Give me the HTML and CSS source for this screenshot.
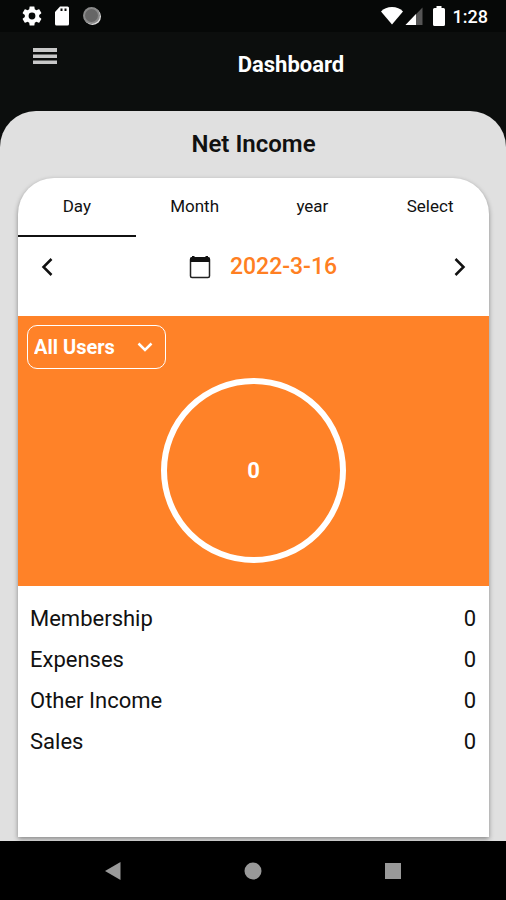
FILE: index.html
```html
<!DOCTYPE html>
<html lang="en">
<head>
<meta charset="utf-8">
<meta name="viewport" content="width=device-width, initial-scale=1">
<title>Dashboard</title>
<link rel="stylesheet" href="styles.css">
</head>
<body>
<div class="status-bar">
  <div class="status-group status-notices">
    <svg width="20" height="20" viewBox="2 2 20 20" aria-hidden="true"><path fill="#fff" d="M19.14 12.94c.04-.3.06-.61.06-.94 0-.32-.02-.64-.07-.94l2.03-1.58c.18-.14.23-.41.12-.61l-1.92-3.32c-.12-.22-.37-.29-.59-.22l-2.39.96c-.5-.38-1.03-.7-1.62-.94l-.36-2.54c-.04-.24-.24-.41-.48-.41h-3.84c-.24 0-.43.17-.47.41l-.36 2.54c-.59.24-1.13.57-1.62.94l-2.39-.96c-.22-.08-.47 0-.59.22L2.74 8.87c-.12.21-.08.47.12.61l2.03 1.58c-.05.3-.09.63-.09.94s.02.64.07.94l-2.03 1.58c-.18.14-.23.41-.12.61l1.92 3.32c.12.22.37.29.59.22l2.39-.96c.5.38 1.03.7 1.62.94l.36 2.54c.05.24.24.41.48.41h3.84c.24 0 .44-.17.47-.41l.36-2.54c.59-.24 1.13-.56 1.62-.94l2.39.96c.22.08.47 0 .59-.22l1.92-3.32c.12-.22.07-.47-.12-.61l-2.01-1.58zM12 15.4a3.4 3.4 0 1 1 0-6.8 3.4 3.4 0 0 1 0 6.8z"/></svg>
    <svg width="16" height="20" viewBox="0 0 16 20" aria-hidden="true"><path fill="#fff" d="M6 .5h7.500a1.500 1.500 0 0 1 1.500 1.500v16a1.500 1.500 0 0 1-1.500 1.500h-11a1.500 1.500 0 0 1-1.500-1.500V6z"/><path fill="#0a0b0b" d="M6.500 2.500h2v2.500h-2zM10.500 2.500h2v2.500h-2z"/></svg>
    <svg width="20" height="20" viewBox="0 0 20 20" aria-hidden="true"><circle cx="10.500" cy="10.500" r="8.500" fill="#e0e0e0"/><circle cx="9.500" cy="9.500" r="8.500" fill="#8a8a8a"/><circle cx="9.500" cy="9.500" r="6.500" fill="#666"/></svg>
  </div>
  <div class="status-group status-system">
    <svg width="22" height="18" viewBox="0 0 22 18" aria-hidden="true"><path fill="#fff" d="M11 17.500L0 4.500C2.500 1.700 6.500 0 11 0s8.500 1.700 11 4.500z"/></svg>
    <svg width="18" height="18" viewBox="0 0 18 18" aria-hidden="true"><path fill="#555" d="M17.500.5V18H.5z"/><path fill="#fff" d="M11 7v11H.5z"/></svg>
    <svg class="battery" width="12" height="20" viewBox="0 0 12 20" aria-hidden="true"><path fill="#fff" d="M3.500 0h5v2H10.500A1.500 1.500 0 0 1 12 3.500v15a1.500 1.500 0 0 1-1.500 1.500h-9A1.500 1.500 0 0 1 0 18.500v-15A1.500 1.500 0 0 1 1.500 2h2z"/></svg>
    <span class="clock">1:28</span>
  </div>
</div>
<header class="app-header">
  <button class="icon-button" type="button" aria-label="Open menu">
    <svg width="24" height="18" viewBox="0 0 24 18" aria-hidden="true"><path fill="#c8c8c8" d="M0 1h24v4H0zM0 7.500h24v3.500H0zM0 13.500h24v3.500H0z"/></svg>
  </button>
  <h1 class="app-title">Dashboard</h1>
</header>
<main class="panel">
  <h2 class="panel-title">Net Income</h2>
  <section class="card">
    <div class="tabs" role="tablist">
      <button class="tab tab-active" type="button" role="tab" aria-selected="true">Day</button>
      <button class="tab" type="button" role="tab" aria-selected="false">Month</button>
      <button class="tab" type="button" role="tab" aria-selected="false">year</button>
      <button class="tab" type="button" role="tab" aria-selected="false">Select</button>
    </div>
    <div class="date-row">
      <button class="icon-button" type="button" aria-label="Previous day">
        <svg width="12" height="20" viewBox="0 0 12 20" aria-hidden="true"><path fill="none" stroke="#111" stroke-width="2.500" d="M10.500 2L2.500 10l8 8"/></svg>
      </button>
      <button class="date-button" type="button">
        <svg width="22" height="24" viewBox="0 0 22 24" aria-hidden="true"><rect x="1.500" y="3" width="19" height="19.500" rx="1.500" fill="none" stroke="#222" stroke-width="1.500"/><path fill="#111" d="M1 7V4a2 2 0 0 1 2-2V1h2.500v1h11V1H19v1a2 2 0 0 1 2 2v3z"/></svg>
        <span>2022-3-16</span>
      </button>
      <button class="icon-button" type="button" aria-label="Next day">
        <svg width="12" height="20" viewBox="0 0 12 20" aria-hidden="true"><path fill="none" stroke="#111" stroke-width="2.500" d="M1.500 2l8 8-8 8"/></svg>
      </button>
    </div>
    <div class="summary">
      <div class="user-filter">
        <select class="user-select" aria-label="Users"><option>All Users</option></select>
        <svg class="user-chevron" width="16" height="10" viewBox="0 0 16 10" aria-hidden="true"><path fill="none" stroke="#fff" stroke-width="2.500" d="M1.500 1.500L8 8l6.500-6.500"/></svg>
      </div>
      <div class="ring">0</div>
    </div>
    <dl class="totals">
      <div class="total"><dt>Membership</dt><dd>0</dd></div>
      <div class="total"><dt>Expenses</dt><dd>0</dd></div>
      <div class="total"><dt>Other Income</dt><dd>0</dd></div>
      <div class="total"><dt>Sales</dt><dd>0</dd></div>
    </dl>
  </section>
</main>
<nav class="system-nav" aria-label="System">
  <button class="icon-button" type="button" aria-label="Back"><svg width="18" height="18" viewBox="0 0 18 18" aria-hidden="true"><path fill="#999" d="M16.500 0v18L1 9z"/></svg></button>
  <button class="icon-button" type="button" aria-label="Home"><svg width="18" height="18" viewBox="0 0 18 18" aria-hidden="true"><circle cx="9" cy="9" r="8.500" fill="#999"/></svg></button>
  <button class="icon-button" type="button" aria-label="Recent apps"><svg width="18" height="18" viewBox="0 0 18 18" aria-hidden="true"><path fill="#999" d="M1 1h16v16H1z"/></svg></button>
</nav>
</body>
</html>
```
FILE: styles.css
```css
* {
  box-sizing: border-box;
}

body {
  margin: 0;
  min-height: 100vh;
  display: flex;
  flex-direction: column;
  background: #0c0e0d;
  color: #111;
  font-family: Roboto, "Liberation Sans", sans-serif;
}

button,
select {
  margin: 0;
  padding: 0;
  border: 0;
  background: none;
  color: inherit;
  font: inherit;
}

svg {
  display: block;
}

h1,
h2,
dl,
dd {
  margin: 0;
}

.status-bar {
  display: flex;
  justify-content: space-between;
  height: 32px;
  padding: 0 18px 0 22px;
  background: #060807;
}

.status-group {
  display: flex;
  align-items: center;
}

.status-notices {
  gap: 12px;
}

.status-system {
  gap: 2px;
}

.battery {
  margin: 0 6px 0 8px;
}

.clock {
  color: #fff;
  font-size: 18px;
  font-weight: 500;
}

.app-header {
  display: grid;
  grid-template-columns: 76px 1fr 0;
  height: 79px;
  color: #fff;
}

.app-header .icon-button {
  align-self: start;
  padding: 15px 19px 15px 33px;
}

.app-title {
  padding-top: 18px;
  font-size: 22px;
  line-height: 30px;
  font-weight: 700;
  text-align: center;
}

.panel {
  flex: 1;
  display: flex;
  flex-direction: column;
  padding: 18px 17px 4px 18px;
  border-radius: 36px 36px 0 0;
  background: #e0e0e0;
}

.panel-title {
  margin-bottom: 19px;
  font-size: 24px;
  line-height: 30px;
  font-weight: 600;
  text-align: center;
}

.card {
  flex: 1;
  overflow: hidden;
  border-radius: 36px 36px 0 0;
  background: #fff;
  box-shadow: 0 2px 5px rgba(0, 0, 0, 0.4);
}

.tabs {
  display: grid;
  grid-template-columns: repeat(4, 1fr);
}

.tab {
  height: 59px;
  border-bottom: 2px solid transparent;
  font-size: 17px;
  line-height: 57px;
}

.tab-active {
  border-bottom-color: #111;
}

.date-row {
  display: flex;
  align-items: center;
  justify-content: space-between;
  height: 79px;
  padding: 0 23px 20px;
}

.date-button {
  display: flex;
  align-items: center;
  gap: 19px;
  padding-left: 19px;
  color: #ff7f22;
  font-size: 23px;
  font-weight: 500;
}

.summary {
  height: 270px;
  padding: 9px;
  background: #ff8228;
  color: #fff;
  font-size: 20px;
  font-weight: 700;
}

.user-filter {
  position: relative;
  width: 139px;
}

.user-select {
  appearance: none;
  width: 100%;
  height: 44px;
  padding: 0 44px 0 6px;
  border: 1px solid #fff;
  border-radius: 10px;
}

.user-chevron {
  position: absolute;
  top: 17px;
  right: 13px;
  pointer-events: none;
}

.ring {
  display: flex;
  align-items: center;
  justify-content: center;
  width: 185px;
  height: 185px;
  margin: 9px auto 0;
  border: 6px solid #fff;
  border-radius: 50%;
  font-size: 22px;
}

.totals {
  padding: 12px 13px 0 12px;
  font-size: 22px;
  line-height: 41px;
}

.total {
  display: flex;
  justify-content: space-between;
}

.system-nav {
  display: flex;
  justify-content: center;
  gap: 122px;
  height: 59px;
  background: #000;
}
```
